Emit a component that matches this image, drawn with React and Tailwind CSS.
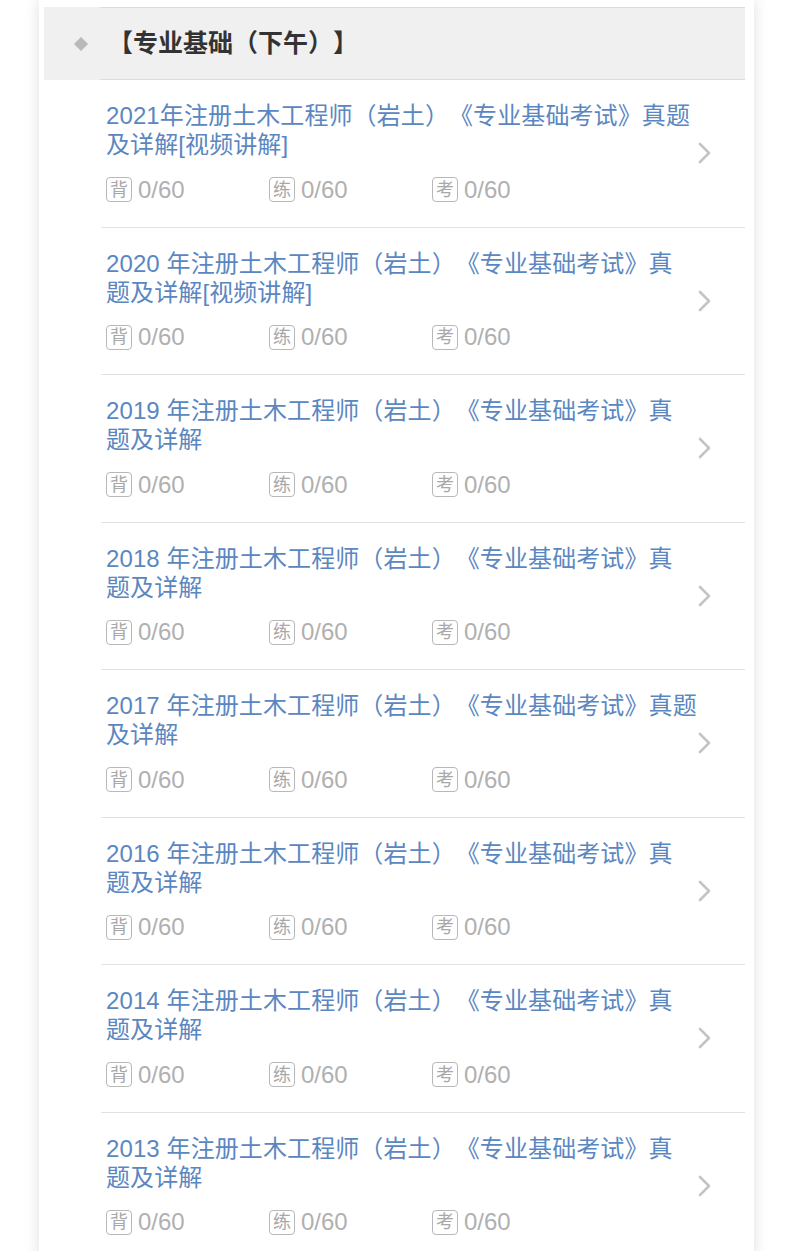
import React from 'react';

const items = [
  { lines: ['2021年注册土木工程师（岩土）《专业基础考试》真题', '及详解[视频讲解]'] },
  { lines: ['2020 年注册土木工程师（岩土）《专业基础考试》真', '题及详解[视频讲解]'] },
  { lines: ['2019 年注册土木工程师（岩土）《专业基础考试》真', '题及详解'] },
  { lines: ['2018 年注册土木工程师（岩土）《专业基础考试》真', '题及详解'] },
  { lines: ['2017 年注册土木工程师（岩土）《专业基础考试》真题', '及详解'] },
  { lines: ['2016 年注册土木工程师（岩土）《专业基础考试》真', '题及详解'] },
  { lines: ['2014 年注册土木工程师（岩土）《专业基础考试》真', '题及详解'] },
  { lines: ['2013 年注册土木工程师（岩土）《专业基础考试》真', '题及详解'] },
];

const stats = ['背', '练', '考'];

function Stat({ label, value }) {
  return (
    <div className="flex items-center w-[163px]">
      <span className="w-[26px] h-[25px] border-[1.5px] border-[#b8b8b8] rounded-[4px] flex items-center justify-center text-[18px] leading-none text-[#a8a8a8]">
        {label}
      </span>
      <span className="ml-[6px] text-[24px] leading-none text-[#b0b0b0]">{value}</span>
    </div>
  );
}

function Item({ lines }) {
  return (
    <div className="ml-[57px] border-b border-[#e2e2e2] flex items-center">
      <div className="flex-1 pl-[5px] pt-[21px] pb-[24.5px]">
        <div className="text-[24px] leading-[29px] text-[#5b87c1] whitespace-nowrap tracking-[0.1px]">
          {lines.map((l) => (
            <div key={l}>{l}</div>
          ))}
        </div>
        <div className="flex mt-[18px]">
          {stats.map((s) => (
            <Stat key={s} label={s} value="0/60" />
          ))}
        </div>
      </div>
      <svg width="14" height="22" viewBox="0 0 14 22" className="mr-[33px]">
        <path d="M2 2 L11 11 L2 20" fill="none" stroke="#c4c4c4" strokeWidth="2.6" strokeLinecap="round" strokeLinejoin="round" />
      </svg>
    </div>
  );
}

export default function App() {
  return (
    <div className="bg-white h-[1251px] overflow-hidden [text-spacing-trim:space-all] font-['Liberation_Sans','Noto_Sans_CJK_SC',sans-serif]">
      <div className="ml-[39px] w-[715px] min-h-[1251px] bg-white shadow-[0_0_14px_rgba(0,0,0,0.13)] pl-[5px] pr-[9px] pt-[7px]">
        {/* section header */}
        <div className="relative bg-[#f0f0f0] h-[73px] flex items-center">
          <div className="absolute top-0 left-[56px] right-0 h-px bg-[#dcdcdc]" />
          <div className="absolute bottom-0 left-[56px] right-0 h-px bg-[#dcdcdc]" />
          <span className="ml-[32px] w-[10px] h-[10px] rotate-45 bg-[#b9b9b9]" />
          <span className="ml-[22px] text-[25px] font-bold text-[#333]">【专业基础（下午）】</span>
        </div>
        {items.map((it) => (
          <Item key={it.lines[0]} lines={it.lines} />
        ))}
      </div>
    </div>
  );
}
